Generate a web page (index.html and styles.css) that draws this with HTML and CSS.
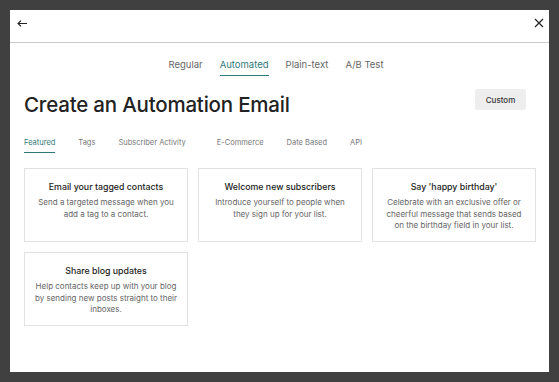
FILE: index.html
```html
<!DOCTYPE html>
<html lang="en">
<head>
    <meta charset="UTF-8">
    <title>Create an Automation Email</title>
    <link rel="stylesheet" href="styles.css">
</head>
<body>
    <div class="modal">
        <header class="modal-head">
            <span class="icon-btn">
                <svg width="10" height="7" viewBox="0 0 10 7"><path d="M10 3.5H1.2M4 0.6L1 3.5 4 6.4" fill="none" stroke="#222" stroke-width="1.1"/></svg>
            </span>
            <span class="icon-btn">
                <svg width="10" height="10" viewBox="0 0 10 10"><path d="M1 1l8 8M9 1L1 9" fill="none" stroke="#222" stroke-width="1.2"/></svg>
            </span>
        </header>

        <nav class="type-tabs">
            <span class="type-tab">Regular</span>
            <span class="type-tab active">Automated</span>
            <span class="type-tab">Plain-text</span>
            <span class="type-tab">A/B Test</span>
        </nav>

        <div class="title-row">
            <h1>Create an Automation Email</h1>
            <button class="custom-btn">Custom</button>
        </div>

        <nav class="cat-tabs">
            <span class="cat-tab active">Featured</span>
            <span class="cat-tab">Tags</span>
            <span class="cat-tab">Subscriber Activity</span>
            <span class="cat-tab">E-Commerce</span>
            <span class="cat-tab">Date Based</span>
            <span class="cat-tab">API</span>
        </nav>

        <div class="cards">
            <div class="card">
                <h3>Email your tagged contacts</h3>
                <p>Send a targeted message when you add a tag to a contact.</p>
            </div>
            <div class="card">
                <h3>Welcome new subscribers</h3>
                <p>Introduce yourself to people when they sign up for your list.</p>
            </div>
            <div class="card">
                <h3>Say 'happy birthday'</h3>
                <p>Celebrate with an exclusive offer or cheerful message that sends based on the birthday field in your list.</p>
            </div>
            <div class="card card-tight">
                <h3>Share blog updates</h3>
                <p>Help contacts keep up with your blog by sending new posts straight to their<br>inboxes.</p>
            </div>
        </div>
    </div>
</body>
</html>
```

FILE: styles.css
```css
/* Automation email picker modal */
* {
    margin: 0;
    padding: 0;
    box-sizing: border-box;
}

body {
    font-family: 'Inter', 'Roboto', sans-serif;
    background-color: #404040;
    color: #222;
    padding: 10px;
    height: 382px;
}

.modal {
    background-color: #fff;
    width: 539px;
    height: 362px;
}

.modal-head {
    height: 33px;
    border-bottom: 1px solid #ccc;
    display: flex;
    justify-content: space-between;
    align-items: flex-start;
    padding: 8px 5px 0 7px;
}

.icon-btn {
    display: flex;
    align-items: center;
    height: 10px;
}

.type-tabs {
    display: flex;
    justify-content: center;
    gap: 17px;
    padding-top: 16px;
    padding-right: 7px;
}

.type-tab {
    font-size: 9.5px;
    color: #666;
    padding-bottom: 5px;
    border-bottom: 1px solid transparent;
}

.type-tab.active {
    color: #2f7a7a;
    border-bottom-color: #2f7a7a;
}

.title-row {
    display: flex;
    justify-content: space-between;
    align-items: flex-start;
    padding: 13px 23px 0 14px;
}

h1 {
    font-size: 20.5px;
    font-weight: 500;
    letter-spacing: -0.2px;
    color: #222;
    margin-top: 3px;
}

.custom-btn {
    background-color: #eeeeee;
    border: none;
    border-radius: 2px;
    font-family: inherit;
    font-size: 8px;
    font-weight: 500;
    color: #333;
    width: 51px;
    height: 21px;
}

.cat-tabs {
    display: flex;
    gap: 23px;
    padding: 21px 14px 0;
}

.cat-tab {
    font-size: 7.5px;
    color: #777;
    padding-bottom: 5px;
    border-bottom: 1px solid transparent;
}

.cat-tab:nth-child(4) {
    margin-left: 8px;
}

.cat-tab.active {
    color: #2f7a7a;
    border-bottom-color: #2f7a7a;
}

.cards {
    display: grid;
    grid-template-columns: repeat(3, 164px);
    grid-auto-rows: 74px;
    gap: 10px;
    padding: 15px 14px 0;
}

.card {
    border: 1px solid #e2e2e2;
    padding: 12px 10px 0;
    text-align: center;
}

.card-tight {
    padding-left: 5px;
    padding-right: 5px;
}

.card h3 {
    font-size: 8.8px;
    font-weight: 500;
    color: #222;
    margin-bottom: 5px;
}

.card p {
    font-size: 8px;
    line-height: 11.5px;
    color: #666;
}
```
